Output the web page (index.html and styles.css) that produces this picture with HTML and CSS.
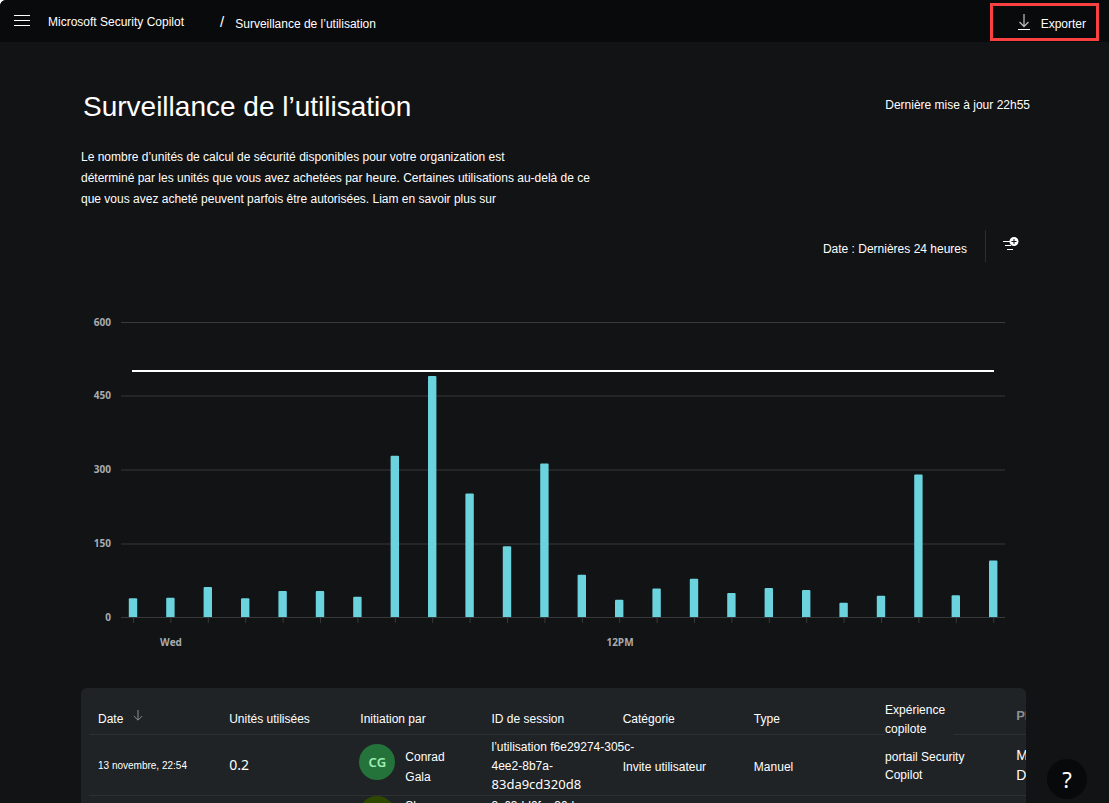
FILE: index.html
```html
<!DOCTYPE html>
<html lang="fr">
<head>
<meta charset="utf-8">
<title>Surveillance de l’utilisation</title>
<link rel="stylesheet" href="styles.css">
</head>
<body>
<div class="app">
  <header class="topbar">
    <button class="icon-button" type="button" aria-label="Menu">
      <svg width="16" height="12" viewBox="0 0 16 12" fill="none" stroke="#fff"><path d="M0 .5h16M0 5.5h16M0 10.5h16"/></svg>
    </button>
    <nav class="breadcrumb">
      <a class="brand" href="#">Microsoft Security Copilot</a>
      <span class="slash">/</span>
      <a class="current" href="#">Surveillance de l’utilisation</a>
    </nav>
    <button class="export" type="button">
      <svg width="12" height="16" viewBox="0 0 12 16" fill="none"><path d="M6 0v12M1.500 8L6 12.500 10.500 8" stroke="#b4b5b6" stroke-width="1.300"/><path d="M0 15.500h12" stroke="#fff"/></svg>
      <span>Exporter</span>
    </button>
  </header>

  <main class="content">
    <div class="heading">
      <h1>Surveillance de l’utilisation</h1>
      <p class="updated">Dernière mise à jour 22h55</p>
    </div>
    <p class="intro">Le nombre d’unités de calcul de sécurité disponibles pour votre organization est<br>déterminé par les unités que vous avez achetées par heure. Certaines utilisations au-delà de ce<br>que vous avez acheté peuvent parfois être autorisées. Liam en savoir plus sur</p>

    <div class="filters">
      <button class="date-filter" type="button">Date : Dernières 24 heures</button>
      <button class="add-filter" type="button" aria-label="Ajouter un filtre">
        <svg width="18" height="16" viewBox="0 0 18 16" fill="none"><path d="M1 4.500h7M3 8.500h6M5 12.500h6" stroke="#fff"/><circle cx="12" cy="4.500" r="4.500" fill="#fff"/><path d="M12 2v5M9.500 4.500h5" stroke="#121315"/></svg>
      </button>
    </div>

    <svg class="chart" viewBox="0 0 945 340" role="img" aria-label="Unités utilisées par heure">
      <g class="grid"><path d="M40 12.500H924M40 86H924M40 160H924M40 234H924M40 307.500H924"/></g>
      <g class="ticks" id="ticks"></g>
      <g class="bars" id="bars"></g>
      <path class="limit" d="M51 61H913"/>
      <g class="y-labels"><text x="30" y="16">600</text><text x="30" y="89">450</text><text x="30" y="163">300</text><text x="30" y="237">150</text><text x="30" y="311">0</text></g>
      <g class="x-labels"><text x="90" y="336">Wed</text><text x="539" y="336">12PM</text></g>
    </svg>

    <div class="table-card">
      <table class="usage">
        <thead>
          <tr>
            <th>Date <svg class="sort" width="10" height="11" viewBox="0 0 10 11" fill="none" stroke="#8b8e90"><path d="M5 0v10M.8 6L5 10.200 9.200 6"/></svg></th>
            <th>Unités utilisées</th>
            <th>Initiation par</th>
            <th>ID de session</th>
            <th>Catégorie</th>
            <th>Type</th>
            <th class="two-line"><span class="wrap-label">Expérience<br>copilote</span></th>
            <th class="plugin">Pl</th>
          </tr>
        </thead>
        <tbody>
          <tr>
            <td class="date">13 novembre, 22:54</td>
            <td class="units">0.2</td>
            <td><div class="person"><span class="avatar green">CG</span><span>Conrad<br>Gala</span></div></td>
            <td class="session">l’utilisation f6e29274-305c-<br>4ee2-8b7a-<br><span class="hash">83da9cd320d8</span></td>
            <td>Invite utilisateur</td>
            <td>Manuel</td>
            <td class="portal">portail Security<br>Copilot</td>
            <td class="large">M<br>D</td>
          </tr>
          <tr class="next">
            <td></td>
            <td></td>
            <td><div class="person"><span class="avatar olive"></span><span>Sh</span></div></td>
            <td>3c63dd0fae30d</td>
            <td></td>
            <td></td>
            <td></td>
            <td></td>
          </tr>
        </tbody>
      </table>
    </div>
  </main>
  <button class="help" type="button" aria-label="Aide">?</button>
</div>
<script src="chart.js"></script>
</body>
</html>
```
FILE: chart.js
```js
const BASE = 307;
const SCALE = 295 / 600;
const usage = [38, 39, 61, 38, 53, 53, 41, 328, 490, 251, 144, 312, 86, 35, 58, 78, 49, 59, 55, 29, 43, 290, 44, 115];
const NS = 'http://www.w3.org/2000/svg';

usage.forEach((value, i) => {
  const x = 52 + i * 37.4;
  const h = value * SCALE;
  const bar = document.createElementNS(NS, 'path');
  bar.setAttribute('d', `M${x - 4.2} ${BASE}v${1 - h}q0 -1 1 -1h6.400q1 0 1 1v${h - 1}z`);
  document.getElementById('bars').append(bar);
  const tick = document.createElementNS(NS, 'path');
  tick.setAttribute('d', `M${x + 0.5} ${BASE + 1}v5`);
  document.getElementById('ticks').append(tick);
});
```
FILE: styles.css
```css
* { box-sizing: border-box; }
html { background: #fff; }
body { margin: 0; font: 12px/20px "Liberation Sans", Arial, sans-serif; color: #fff; }
h1, p { margin: 0; font-weight: 400; }
button { padding: 0; border: 0; background: none; color: inherit; font: inherit; cursor: pointer; }
a { color: inherit; text-decoration: none; }
svg { display: block; }

.app { position: relative; height: 100vh; overflow: hidden; background: #121315; border-top-left-radius: 6px; }

.topbar { display: flex; align-items: center; height: 42px; padding: 0 10px 0 14px; background: #090a0c; }
.icon-button { flex: none; }
.breadcrumb { display: flex; flex: 1; align-items: center; margin-left: 18px; padding-top: 2px; white-space: nowrap; }
.slash { margin-left: 36px; font-size: 15px; }
.current { margin-left: 11px; padding-top: 4px; }
.export { display: flex; align-items: center; justify-content: flex-end; gap: 11px; width: 109px; height: 38px; padding-right: 10px; margin-top: 2px; border: 3px solid #fa4141; }
.export span { padding-top: 4px; }

.content { padding: 47px 83px 0 81px; }
.heading { display: flex; align-items: center; justify-content: space-between; height: 36px; padding-left: 2px; }
h1 { font-size: 28px; line-height: 36px; }
.updated { margin-right: -4px; padding-bottom: 4px; }
.intro { margin-top: 22px; line-height: 21px; white-space: nowrap; }

.filters { display: flex; align-items: center; justify-content: flex-end; height: 32px; margin-top: 20px; }
.date-filter { padding: 5px 18px 0 0; }
.add-filter { display: flex; align-items: center; height: 32px; padding: 0 6px 2px 16px; border-left: 1px solid #2c2d2f; }

.chart { width: 100%; height: auto; margin-top: 48px; }
.grid, .ticks { stroke: #38393b; fill: none; }
.bars { fill: #6bd3de; }
.limit { stroke: #fff; stroke-width: 2; }
.chart text { font: 700 10px "Open Sans", sans-serif; fill: #a9acaf; }
.y-labels { text-anchor: end; }
.x-labels { text-anchor: middle; }

.table-card { margin-top: 38px; padding-left: 8px; background: #202326; border-radius: 6px; overflow: hidden; }
.usage { width: 112%; table-layout: fixed; border-collapse: separate; border-spacing: 0; }
.usage th, .usage td { padding: 0 0 0 9px; border-bottom: 1px solid #2d3033; font-weight: 400; text-align: left; white-space: nowrap; }
.usage th { height: 47px; padding-top: 15px; }
.usage td { height: 61px; padding-top: 4px; }
.sort { display: inline-block; margin: 0 0 2px 6px; }
.usage .two-line { padding-top: 12px; }
.wrap-label { display: block; position: relative; width: 69px; margin-bottom: -6px; line-height: 19px; background: #202326; }
.usage .plugin { font-size: 13px; font-weight: 700; color: #8b8e90; padding-top: 9px; }
.usage .date { padding-top: 2px; font-size: 10px; }
.usage .units { padding-top: 0; font: 14px/20px "Noto Sans", sans-serif; }
.usage .session { padding-top: 2px; line-height: 19px; }
.usage .portal { padding-top: 2px; line-height: 18px; }
.hash { font: 13px/17px "Noto Sans", sans-serif; }
.usage .large { padding-top: 0; font-size: 14px; }
.person { display: flex; align-items: center; gap: 10px; }
.avatar { display: flex; align-items: center; justify-content: center; width: 36px; height: 36px; margin: -10px 0 0 -1px; border-radius: 50%; font: 600 13px "Noto Sans", sans-serif; }
.green { background: #23733b; color: #9ff0b4; }
.olive { margin-top: 0; background: #2e4800; }
.usage .next td { padding-top: 0; vertical-align: top; }
.next .person { align-items: flex-start; }

.help { position: absolute; right: 22px; bottom: 4px; width: 40px; height: 40px; border-radius: 50%; background: #08090b; font: 22px/40px "Noto Sans", sans-serif; }
```
